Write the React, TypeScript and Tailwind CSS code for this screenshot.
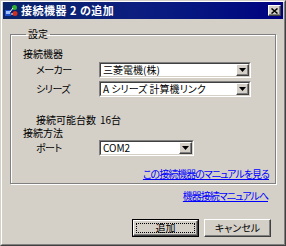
import React from 'react';

const font = "font-['Noto_Sans_CJK_JP',sans-serif] [font-feature-settings:'palt']";

const Combo = ({ value, width }: { value: string; width: string }) => (
  <div
    className={`${width} h-[16px] flex items-center bg-white border-t border-l border-t-[#808080] border-l-[#808080] border-b border-r border-b-white border-r-white`}
  >
    <div className="flex-1 h-full flex items-center border-t border-l border-t-[#404040] border-l-[#404040] border-b border-r border-b-[#d4d0c8] border-r-[#d4d0c8]">
      <span className="flex-1 pl-[2px] text-[10px] leading-[12px] text-black whitespace-nowrap">{value}</span>
      <div className="w-[13px] h-[12px] bg-[#d4d0c8] flex items-center justify-center border-t border-l border-t-white border-l-white border-b border-r border-b-[#404040] border-r-[#404040] shadow-[inset_-1px_-1px_0_#808080]">
        <svg width="7" height="4" viewBox="0 0 7 4">
          <path d="M0 0H7L3.5 4Z" fill="#000" />
        </svg>
      </div>
    </div>
  </div>
);

const Button = ({ label, isDefault }: { label: string; isDefault?: boolean }) => (
  <div className={`w-[67px] h-[18px] ${isDefault ? 'border border-black' : ''}`}>
    <div className="w-full h-full bg-[#d4d0c8] border-t border-l border-t-white border-l-white border-b border-r border-b-[#404040] border-r-[#404040] shadow-[inset_-1px_-1px_0_#808080] flex items-center justify-center p-[2px]">
      <div className={`w-full h-full flex items-center justify-center ${isDefault ? 'outline outline-1 outline-dotted outline-black -outline-offset-1' : ''}`}>
        <span className="text-[10px] leading-none text-black">{label}</span>
      </div>
    </div>
  </div>
);

const DeviceIcon = () => (
  <svg width="13" height="13" viewBox="0 0 13 13">
    <rect x="0" y="6" width="6" height="6" fill="#2050c8" />
    <rect x="1" y="7" width="4" height="3" fill="#a0c0ff" />
    <circle cx="9.5" cy="3.5" r="2.5" fill="#30b030" />
    <circle cx="10" cy="9.5" r="2.5" fill="#d03020" />
    <path d="M5 8L8 4M6 10L8 10" stroke="#fff" strokeWidth="1" />
  </svg>
);

const App = () => {
  return (
    <div className={`w-[286px] h-[246px] bg-[#d4d0c8] ${font} text-black border border-t-[#d4d0c8] border-l-[#d4d0c8] border-b-[#404040] border-r-[#404040]`}>
      <div className="w-full h-full flex flex-col border border-t-white border-l-white border-b-[#808080] border-r-[#808080] px-[1px]">
        {/* title bar */}
        <div className="h-[17px] flex items-center pl-[2px] pr-[2px] bg-gradient-to-r from-[#0a246a] via-[#0c1d80] to-[#000080]">
          <DeviceIcon />
          <span className="ml-[3px] text-[11px] font-bold leading-none text-white tracking-[0.5px]">接続機器 2 の追加</span>
          <div className="ml-auto w-[13px] h-[11px] bg-[#d4d0c8] flex items-center justify-center border-t border-l border-t-white border-l-white border-b border-r border-b-[#404040] border-r-[#404040] shadow-[inset_-1px_-1px_0_#808080]">
            <svg width="7" height="6" viewBox="0 0 7 6">
              <path d="M0.5 0.5L6.5 5.5M6.5 0.5L0.5 5.5" stroke="#000" strokeWidth="1.5" />
            </svg>
          </div>
        </div>

        {/* body */}
        <div className="flex-1 flex flex-col px-[7px] pt-[9px]">
          <fieldset className="border border-[#808080] shadow-[inset_1px_1px_0_white,1px_1px_0_white] pl-[12px] pr-[6px] pb-[3px] flex flex-col">
            <legend className="ml-[3px] px-[2px] text-[10px] leading-[12px]">設定</legend>
            <div className="mt-[8px] text-[10px] leading-[12px]">接続機器</div>
            <div className="mt-[2px] flex items-center">
              <span className="w-[76px] shrink-0 pl-[13px] text-[10px] leading-[12px] tracking-[-0.5px]">メーカー</span>
              <Combo value="三菱電機(株)" width="w-[152px]" />
            </div>
            <div className="mt-[3px] flex items-center">
              <span className="w-[76px] shrink-0 pl-[13px] text-[10px] leading-[12px] tracking-[-0.5px]">シリーズ</span>
              <Combo value="A シリーズ 計算機リンク" width="w-[152px]" />
            </div>
            <div className="mt-[17px] flex items-center text-[10px] leading-[12px]">
              <span className="pl-[13px] whitespace-nowrap">接続可能台数</span>
              <span className="ml-[4px]">16台</span>
            </div>
            <div className="mt-[1px] text-[10px] leading-[12px]">接続方法</div>
            <div className="mt-[1px] flex items-center">
              <span className="w-[76px] shrink-0 pl-[13px] text-[10px] leading-[12px] tracking-[-0.5px]">ポート</span>
              <Combo value="COM2" width="w-[95px]" />
            </div>
            <div className="mt-[12px] flex justify-end">
              <span className="text-[10px] leading-[12px] text-[#0000ff] underline tracking-[-1px]">この接続機器のマニュアルを見る</span>
            </div>
          </fieldset>

          <div className="mt-[6px] flex justify-end pr-[8px]">
            <span className="text-[10px] leading-[12px] text-[#0000ff] underline tracking-[-1px]">機器接続マニュアルへ</span>
          </div>

          <div className="mt-[17px] flex justify-end gap-[5px] pr-[5px]">
            <Button label="追加" isDefault />
            <Button label="キャンセル" />
          </div>
        </div>
      </div>
    </div>
  );
};

export default App;
